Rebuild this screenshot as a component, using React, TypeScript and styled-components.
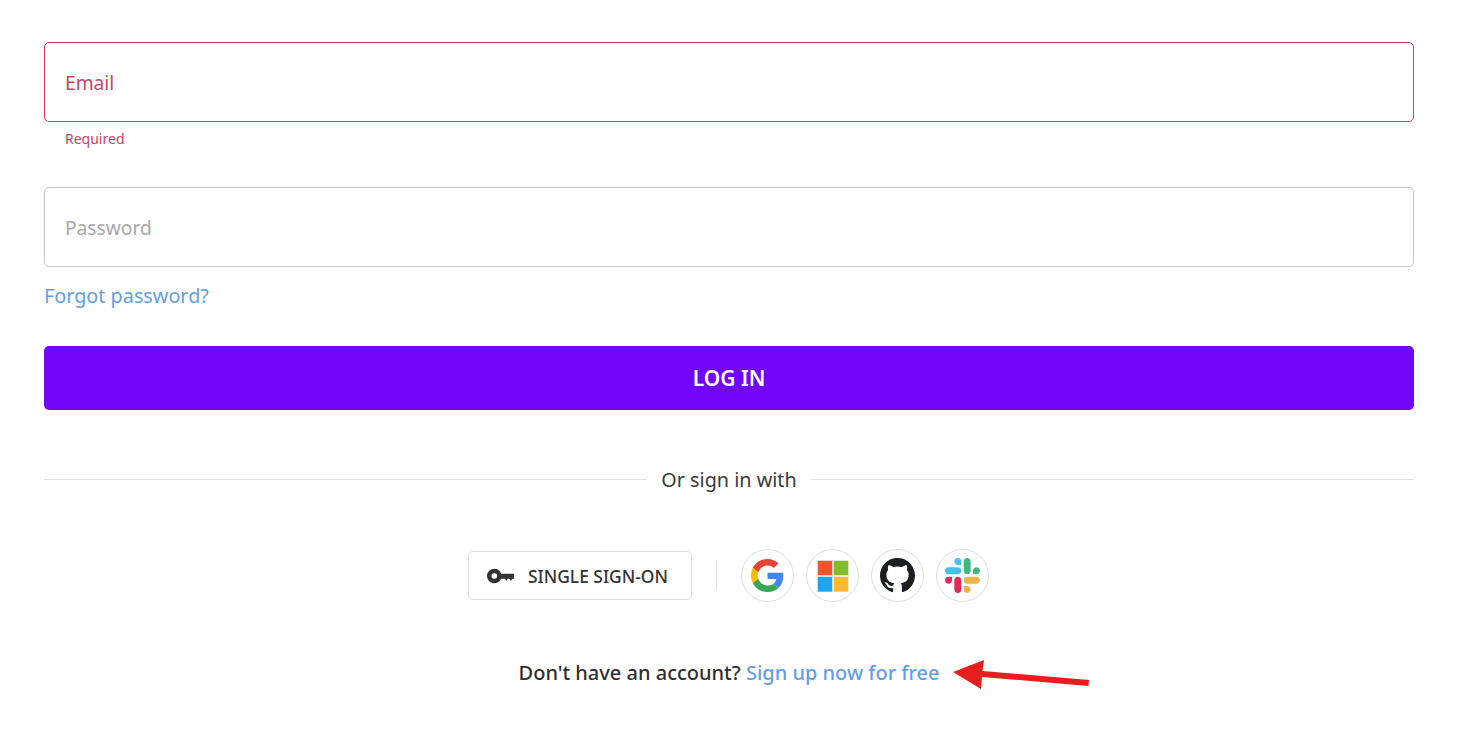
import styled, { createGlobalStyle } from 'styled-components';

const GlobalStyle = createGlobalStyle`
	html, body {
		margin: 0;
		padding: 0;
		background: #fff;
	}
	body {
		font-family: "Noto Sans", "Open Sans", sans-serif;
		color: #2f2f2f;
	}
`;

const Page = styled.div`
	position: relative;
	box-sizing: border-box;
	width: 1465px;
	height: 736px;
	padding: 42px 51px 0 44px;
	overflow: hidden;
`;

const Input = styled.input<{ $invalid?: boolean }>`
	display: block;
	box-sizing: border-box;
	width: 100%;
	height: 80px;
	padding: 0 20px;
	font-family: inherit;
	font-size: 19.2px;
	line-height: 28px;
	background: #fff;
	border: 1px solid ${(p) => (p.$invalid ? '#d13c63' : '#c4c4c4')};
	border-radius: 5px;
	outline: none;

	&::placeholder {
		color: ${(p) => (p.$invalid ? '#cf4464' : '#a8a8a8')};
		opacity: 1;
	}
`;

const ErrorText = styled.div`
	height: 65px;
	padding: 7px 0 0 21px;
	box-sizing: border-box;
	font-size: 14px;
	line-height: 20px;
	color: #d13c63;
`;

const Forgot = styled.a`
	display: block;
	margin: 15px 0 36px;
	font-size: 19.8px;
	line-height: 28px;
	color: #659ee6;
`;

const LoginButton = styled.button`
	display: block;
	width: 100%;
	height: 64px;
	padding: 0;
	border: none;
	border-radius: 5px;
	background: #7206f8;
	color: #fff;
	font-family: inherit;
	font-size: 21px;
	font-weight: 600;
`;

const Divider = styled.div`
	display: flex;
	align-items: center;
	gap: 14px;
	margin-top: 54px;
	font-size: 19.8px;
	line-height: 28px;
	color: #3a3a3a;

	&::before,
	&::after {
		content: '';
		flex: 1;
		height: 1px;
		background: #e0e0e0;
	}
`;

const DividerLabel = styled.span`
	padding-top: 2px;
`;

const Providers = styled.div`
	display: flex;
	align-items: center;
	justify-content: center;
	margin-top: 54px;
	padding-right: 1px;
	height: 54px;
`;

const SsoButton = styled.button`
	display: flex;
	align-items: center;
	gap: 13px;
	box-sizing: border-box;
	width: 224px;
	height: 49px;
	padding: 1px 0 0 18px;
	background: #fff;
	border: 1px solid #dedede;
	border-radius: 5px;
	font-family: inherit;
	font-size: 17.4px;
	font-weight: 500;
	color: #333;

	svg {
		flex-shrink: 0;
	}
`;

const Separator = styled.span`
	width: 1px;
	height: 30px;
	margin: 0 24px;
	background: #e0e0e0;
`;

const Socials = styled.div`
	display: flex;
	gap: 12px;
`;

const SocialButton = styled.button`
	display: flex;
	align-items: center;
	justify-content: center;
	box-sizing: border-box;
	width: 53px;
	height: 53px;
	padding: 0;
	background: #fff;
	border: 1px solid #dedede;
	border-radius: 50%;
`;

const SignUp = styled.div`
	margin-top: 57px;
	text-align: center;
	font-size: 20px;
	line-height: 28px;
	font-weight: 500;
	color: #2f2f2f;
`;

const SignUpLink = styled.a`
	color: #659ee6;
`;

const Arrow = styled.svg`
	position: absolute;
	left: 950px;
	top: 656px;
`;

function KeyIcon() {
	return (
		<svg width="28" height="16" viewBox="0 0 28 16">
			<path
				fill="#333"
				fillRule="evenodd"
				d="M7.3.7a7.3 7.3 0 0 1 6.9 5H27v5h-1.6l-1.5 2.2-1.5-2.2h-1.6l-1.5 2.2-1.5-2.2h-3.7A7.3 7.3 0 1 1 7.3.7zM7.3 5.2a2.8 2.8 0 1 0 0 5.6 2.8 2.8 0 0 0 0-5.6z"
			/>
		</svg>
	);
}

function GoogleIcon() {
	return (
		<svg width="33" height="33" viewBox="0 0 48 48">
			<path fill="#EA4335" d="M24 9.5c3.54 0 6.71 1.22 9.21 3.6l6.85-6.85C35.9 2.38 30.47 0 24 0 14.62 0 6.51 5.38 2.56 13.22l7.98 6.19C12.43 13.72 17.74 9.5 24 9.5z" />
			<path fill="#4285F4" d="M46.98 24.55c0-1.57-.15-3.09-.38-4.55H24v9.02h12.94c-.58 2.96-2.26 5.48-4.78 7.18l7.73 6c4.51-4.18 7.09-10.36 7.09-17.65z" />
			<path fill="#FBBC05" d="M10.53 28.59c-.48-1.45-.76-2.99-.76-4.59s.27-3.14.76-4.59l-7.98-6.19C.92 16.46 0 20.12 0 24c0 3.88.92 7.54 2.56 10.78l7.97-6.19z" />
			<path fill="#34A853" d="M24 48c6.48 0 11.93-2.13 15.89-5.81l-7.73-6c-2.15 1.45-4.92 2.3-8.16 2.3-6.26 0-11.57-4.22-13.47-9.91l-7.98 6.19C6.51 42.62 14.62 48 24 48z" />
		</svg>
	);
}

function MicrosoftIcon() {
	return (
		<svg width="33" height="33" viewBox="0 0 33 33">
			<rect x="1.7" y="1.7" width="14.6" height="14.6" fill="#f25430" />
			<rect x="17.7" y="1.7" width="14.6" height="14.6" fill="#84bb2f" />
			<rect x="1.7" y="17.7" width="14.6" height="15" fill="#1fa5f0" />
			<rect x="17.7" y="17.7" width="14.6" height="15" fill="#ffba32" />
		</svg>
	);
}

function GithubIcon() {
	return (
		<svg width="35" height="35" viewBox="0 0 16 16">
			<path
				fill="#1b1f23"
				d="M8 0C3.58 0 0 3.58 0 8c0 3.54 2.29 6.53 5.47 7.59.4.07.55-.17.55-.38 0-.19-.01-.82-.01-1.49-2.01.37-2.53-.49-2.69-.94-.09-.23-.48-.94-.82-1.13-.28-.15-.68-.52-.01-.53.63-.01 1.08.58 1.23.82.72 1.21 1.87.87 2.33.66.07-.52.28-.87.51-1.07-1.78-.2-3.64-.89-3.64-3.95 0-.87.31-1.59.82-2.15-.08-.2-.36-1.02.08-2.12 0 0 .67-.21 2.2.82.64-.18 1.32-.27 2-.27.68 0 1.36.09 2 .27 1.53-1.04 2.2-.82 2.2-.82.44 1.1.16 1.92.08 2.12.51.56.82 1.27.82 2.15 0 3.07-1.87 3.75-3.65 3.95.29.25.54.73.54 1.48 0 1.07-.01 1.93-.01 2.2 0 .21.15.46.55.38A8.013 8.013 0 0016 8c0-4.42-3.58-8-8-8z"
			/>
		</svg>
	);
}

function SlackIcon() {
	return (
		<svg width="35" height="35" viewBox="0 0 2447.6 2452.5">
			<path fill="#46c1ec" d="M897.4 0c-135.3.1-244.8 109.9-244.7 245.2-.1 135.3 109.5 245.1 244.8 245.2h244.8V245.3c.1-135.3-109.5-245.1-244.9-245.3.1 0 .1 0 0 0m0 654H244.8C109.5 654.1-.1 763.9 0 899.2c-.2 135.3 109.4 245.1 244.7 245.3h652.7c135.3-.1 244.9-109.9 244.8-245.2.1-135.4-109.5-245.2-244.8-245.3z" />
			<path fill="#3cb883" d="M2447.6 899.2c.1-135.3-109.5-245.1-244.8-245.2-135.3.1-244.9 109.9-244.8 245.2v245.3h244.8c135.3-.1 244.9-109.9 244.8-245.3zm-652.7 0V245.2c.1-135.2-109.4-245-244.7-245.2-135.3.1-244.9 109.9-244.8 245.2v654c-.2 135.3 109.4 245.1 244.7 245.3 135.3-.1 244.9-109.9 244.8-245.3z" />
			<path fill="#edb44e" d="M1550.1 2452.5c135.3-.1 244.9-109.9 244.8-245.2.1-135.3-109.5-245.1-244.8-245.2h-244.8v245.2c-.1 135.2 109.5 245 244.8 245.2zm0-654.1h652.7c135.3-.1 244.9-109.9 244.8-245.2.2-135.3-109.4-245.1-244.7-245.3h-652.7c-135.3.1-244.9 109.9-244.8 245.2-.1 135.4 109.4 245.2 244.7 245.3z" />
			<path fill="#df2a5e" d="M0 1553.2c-.1 135.3 109.5 245.1 244.8 245.2 135.3-.1 244.9-109.9 244.8-245.2v-245.2H244.8c-135.3.1-244.9 109.9-244.8 245.2zm652.7 0v654c-.2 135.3 109.4 245.1 244.7 245.3 135.3-.1 244.9-109.9 244.8-245.2v-653.9c.2-135.3-109.4-245.1-244.7-245.3-135.4 0-244.9 109.8-244.8 245.1 0 0 0 .1 0 0" />
		</svg>
	);
}

export default function App() {
	return (
		<Page>
			<GlobalStyle />
			<Input $invalid placeholder="Email" />
			<ErrorText>Required</ErrorText>
			<Input type="password" placeholder="Password" />
			<Forgot>Forgot password?</Forgot>
			<LoginButton>LOG IN</LoginButton>
			<Divider>
				<DividerLabel>Or sign in with</DividerLabel>
			</Divider>
			<Providers>
				<SsoButton>
					<KeyIcon />
					SINGLE SIGN-ON
				</SsoButton>
				<Separator />
				<Socials>
					<SocialButton><GoogleIcon /></SocialButton>
					<SocialButton><MicrosoftIcon /></SocialButton>
					<SocialButton><GithubIcon /></SocialButton>
					<SocialButton><SlackIcon /></SocialButton>
				</Socials>
			</Providers>
			<SignUp>
				Don't have an account? <SignUpLink>Sign up now for free</SignUpLink>
			</SignUp>
			<Arrow width="142" height="36" viewBox="0 0 142 36">
				<polygon
					fill="#e81e1e"
					points="3,16 34,4 32.5,15 139,24 138.5,30 32,21 31,33"
				/>
			</Arrow>
		</Page>
	);
}
